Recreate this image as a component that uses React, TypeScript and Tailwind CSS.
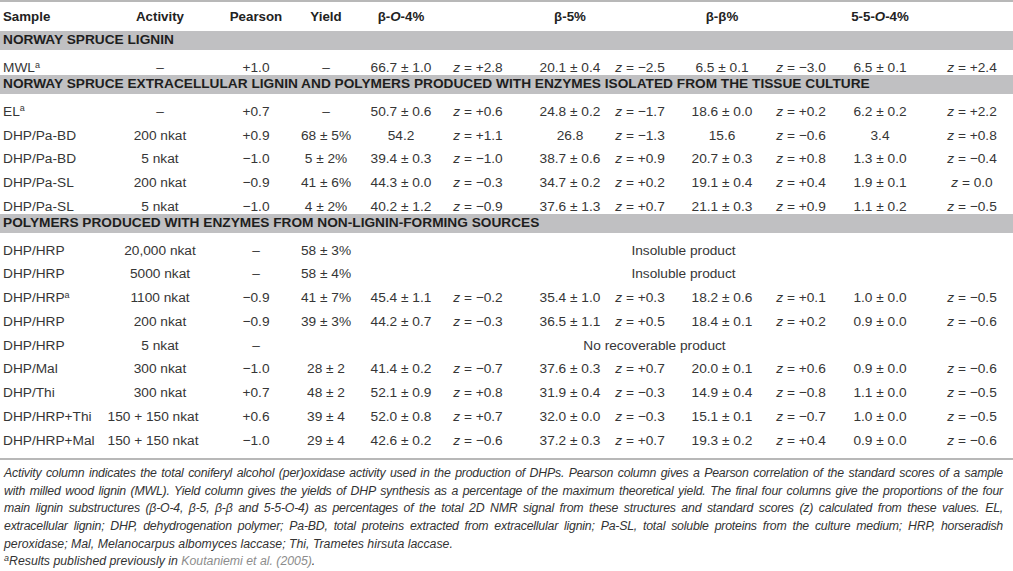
import React from 'react';

type Row = {
  sample: string;
  sup?: boolean;
  activity: string;
  pearson: string;
  yld: string;
  values?: string[];
  note?: string;
  noteSpan?: 'yield' | 'pearson';
};

const GRID =
  'grid grid-cols-[100px_120px_72px_68px_82px_72px_112px_28px_136px_22px_136px_48px]';

const sections: { title: string; rows: Row[] }[] = [
  {
    title: 'NORWAY SPRUCE LIGNIN',
    rows: [
      {
        sample: 'MWL',
        sup: true,
        activity: '–',
        pearson: '+1.0',
        yld: '–',
        values: ['66.7 ± 1.0', '+2.8', '20.1 ± 0.4', '−2.5', '6.5 ± 0.1', '−3.0', '6.5 ± 0.1', '+2.4'],
      },
    ],
  },
  {
    title:
      'NORWAY SPRUCE EXTRACELLULAR LIGNIN AND POLYMERS PRODUCED WITH ENZYMES ISOLATED FROM THE TISSUE CULTURE',
    rows: [
      {
        sample: 'EL',
        sup: true,
        activity: '–',
        pearson: '+0.7',
        yld: '–',
        values: ['50.7 ± 0.6', '+0.6', '24.8 ± 0.2', '−1.7', '18.6 ± 0.0', '+0.2', '6.2 ± 0.2', '+2.2'],
      },
      {
        sample: 'DHP/Pa-BD',
        activity: '200 nkat',
        pearson: '+0.9',
        yld: '68 ± 5%',
        values: ['54.2', '+1.1', '26.8', '−1.3', '15.6', '−0.6', '3.4', '+0.8'],
      },
      {
        sample: 'DHP/Pa-BD',
        activity: '5 nkat',
        pearson: '−1.0',
        yld: '5 ± 2%',
        values: ['39.4 ± 0.3', '−1.0', '38.7 ± 0.6', '+0.9', '20.7 ± 0.3', '+0.8', '1.3 ± 0.0', '−0.4'],
      },
      {
        sample: 'DHP/Pa-SL',
        activity: '200 nkat',
        pearson: '−0.9',
        yld: '41 ± 6%',
        values: ['44.3 ± 0.0', '−0.3', '34.7 ± 0.2', '+0.2', '19.1 ± 0.4', '+0.4', '1.9 ± 0.1', '0.0'],
      },
      {
        sample: 'DHP/Pa-SL',
        activity: '5 nkat',
        pearson: '−1.0',
        yld: '4 ± 2%',
        values: ['40.2 ± 1.2', '−0.9', '37.6 ± 1.3', '+0.7', '21.1 ± 0.3', '+0.9', '1.1 ± 0.2', '−0.5'],
      },
    ],
  },
  {
    title: 'POLYMERS PRODUCED WITH ENZYMES FROM NON-LIGNIN-FORMING SOURCES',
    rows: [
      { sample: 'DHP/HRP', activity: '20,000 nkat', pearson: '–', yld: '58 ± 3%', note: 'Insoluble product', noteSpan: 'yield' },
      { sample: 'DHP/HRP', activity: '5000 nkat', pearson: '–', yld: '58 ± 4%', note: 'Insoluble product', noteSpan: 'yield' },
      {
        sample: 'DHP/HRP',
        sup: true,
        activity: '1100 nkat',
        pearson: '−0.9',
        yld: '41 ± 7%',
        values: ['45.4 ± 1.1', '−0.2', '35.4 ± 1.0', '+0.3', '18.2 ± 0.6', '+0.1', '1.0 ± 0.0', '−0.5'],
      },
      {
        sample: 'DHP/HRP',
        activity: '200 nkat',
        pearson: '−0.9',
        yld: '39 ± 3%',
        values: ['44.2 ± 0.7', '−0.3', '36.5 ± 1.1', '+0.5', '18.4 ± 0.1', '+0.2', '0.9 ± 0.0', '−0.6'],
      },
      { sample: 'DHP/HRP', activity: '5 nkat', pearson: '–', yld: '', note: 'No recoverable product', noteSpan: 'pearson' },
      {
        sample: 'DHP/Mal',
        activity: '300 nkat',
        pearson: '−1.0',
        yld: '28 ± 2',
        values: ['41.4 ± 0.2', '−0.7', '37.6 ± 0.3', '+0.7', '20.0 ± 0.1', '+0.6', '0.9 ± 0.0', '−0.6'],
      },
      {
        sample: 'DHP/Thi',
        activity: '300 nkat',
        pearson: '+0.7',
        yld: '48 ± 2',
        values: ['52.1 ± 0.9', '+0.8', '31.9 ± 0.4', '−0.3', '14.9 ± 0.4', '−0.8', '1.1 ± 0.0', '−0.5'],
      },
      {
        sample: 'DHP/HRP+Thi',
        activity: '150 + 150 nkat',
        pearson: '+0.6',
        yld: '39 ± 4',
        values: ['52.0 ± 0.8', '+0.7', '32.0 ± 0.0', '−0.3', '15.1 ± 0.1', '−0.7', '1.0 ± 0.0', '−0.5'],
      },
      {
        sample: 'DHP/HRP+Mal',
        activity: '150 + 150 nkat',
        pearson: '−1.0',
        yld: '29 ± 4',
        values: ['42.6 ± 0.2', '−0.6', '37.2 ± 0.3', '+0.7', '19.3 ± 0.2', '+0.4', '0.9 ± 0.0', '−0.6'],
      },
    ],
  },
];

function Cell({ children, className = '' }: { children?: React.ReactNode; className?: string }) {
  return <div className={`flex justify-center whitespace-nowrap ${className}`}>{children}</div>;
}

function Z({ v }: { v: string }) {
  return (
    <span>
      <i>z</i> = {v}
    </span>
  );
}

function DataRow({ row }: { row: Row }) {
  return (
    <div className={`${GRID} h-[23.75px] items-center pt-[7px]`}>
      <div className="whitespace-nowrap pl-[3px]">
        {row.sample}
        {row.sup && <sup className="text-[9px]">a</sup>}
      </div>
      <Cell className={row.activity.startsWith('150') ? 'pr-[14px]' : ''}>{row.activity}</Cell>
      <Cell>{row.pearson}</Cell>
      {row.noteSpan === 'pearson' ? (
        <Cell className="col-span-9 pl-[21px]">{row.note}</Cell>
      ) : (
        <>
          <Cell>{row.yld}</Cell>
          {row.note ? (
            <Cell className="col-span-8 pl-[11px]">{row.note}</Cell>
          ) : (
            row.values!.map((v, i) => <Cell key={i}>{i % 2 === 1 ? <Z v={v} /> : v}</Cell>)
          )}
        </>
      )}
    </div>
  );
}

// first four footnote lines are justified edge to edge
const justified = 'whitespace-nowrap text-justify tracking-[-0.2px] [text-align-last:justify]';

export default function App() {
  return (
    <div className="w-[1013px] bg-white font-['Liberation_Sans',Arial,sans-serif] text-[13.7px] text-[#363636]">
      <div className="h-[2px] bg-[#b8b8b8]" />
      <div className={`${GRID} h-[29px] items-center text-[13.3px] font-bold text-[#222]`}>
        <div className="pl-[3px]">Sample</div>
        <Cell>Activity</Cell>
        <Cell>Pearson</Cell>
        <Cell>Yield</Cell>
        <Cell>
          β-<i>O</i>-4%
        </Cell>
        <Cell />
        <Cell>β-5%</Cell>
        <Cell />
        <Cell>β-β%</Cell>
        <Cell />
        <Cell>
          5-5-<i>O</i>-4%
        </Cell>
        <Cell />
      </div>

      {sections.map((s) => (
        <div key={s.title}>
          <div className="h-[20px]">
            <div className="flex h-[19px] items-center whitespace-nowrap bg-[#c0c0c2] pl-[3px] font-bold text-[#1e1e1e]">
              {s.title}
            </div>
          </div>
          {s.rows.map((r, i) => (
            <DataRow key={i} row={r} />
          ))}
        </div>
      ))}

      <div className="mt-[11px] h-[2px] bg-[#b8b8b8]" />

      <div className="pl-[4px] pr-[10px] pt-[5px] text-[12.3px] italic leading-[17.6px] text-[#333]">
        <div className={justified}>
          Activity column indicates the total coniferyl alcohol (per)oxidase activity used in the production of DHPs.
          Pearson column gives a Pearson correlation of the standard scores of a sample
        </div>
        <div className={justified}>
          with milled wood lignin (MWL). Yield column gives the yields of DHP synthesis as a percentage of the maximum
          theoretical yield. The final four columns give the proportions of the four
        </div>
        <div className={justified}>
          main lignin substructures (β-O-4, β-5, β-β and 5-5-O-4) as percentages of the total 2D NMR signal from these
          structures and standard scores (z) calculated from these values. EL,
        </div>
        <div className={justified}>
          extracellular lignin; DHP, dehydrogenation polymer; Pa-BD, total proteins extracted from extracellular lignin;
          Pa-SL, total soluble proteins from the culture medium; HRP, horseradish
        </div>
        <div>peroxidase; Mal, Melanocarpus albomyces laccase; Thi, Trametes hirsuta laccase.</div>
        <div>
          <sup className="text-[9px]">a</sup>Results published previously in{' '}
          <span className="text-[#8c8c8c]">Koutaniemi et al. (2005)</span>.
        </div>
      </div>
    </div>
  );
}
